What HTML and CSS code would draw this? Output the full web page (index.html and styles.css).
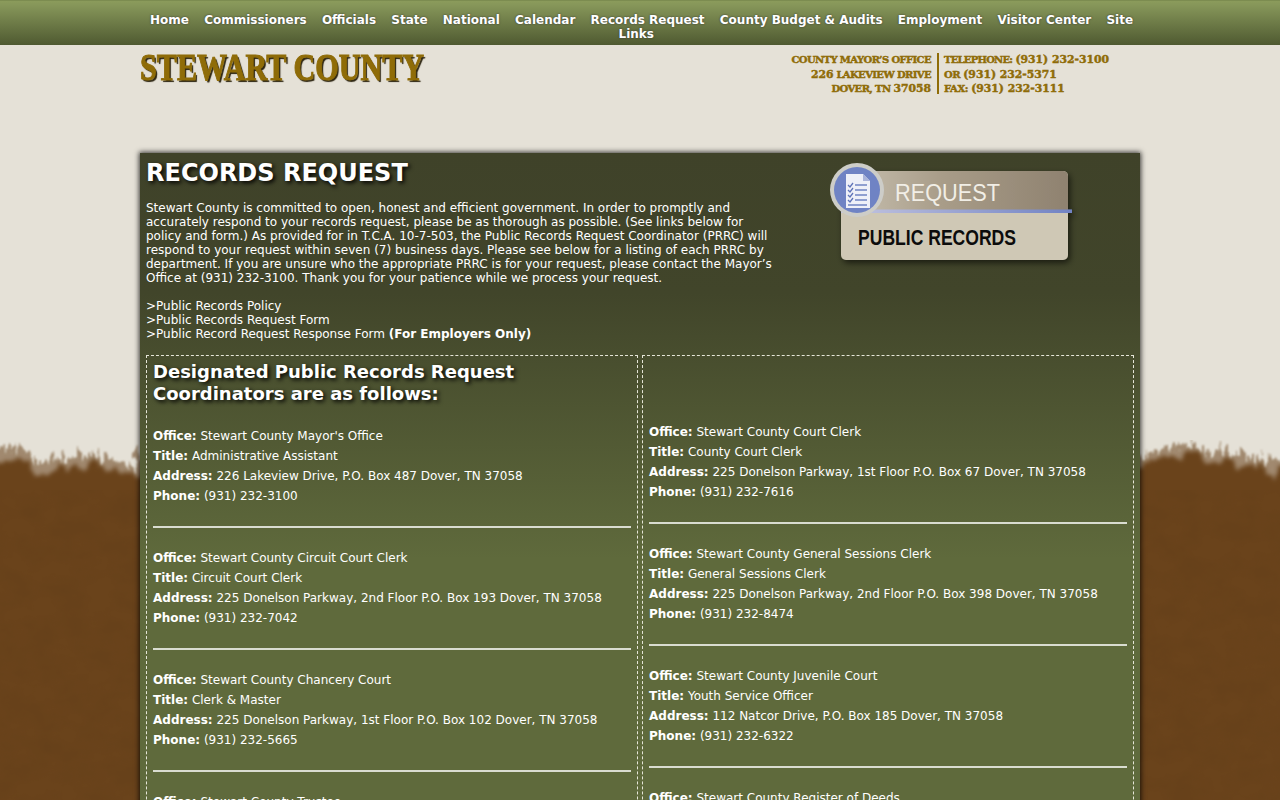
FILE: index.html
```html
<!DOCTYPE html>
<html lang="en">
<head>
<meta charset="utf-8">
<title>Records Request - Stewart County</title>
<link rel="stylesheet" href="styles.css">
</head>
<body>
<svg class="ground" width="1280" height="360" viewBox="0 0 1280 360" aria-hidden="true">
  <defs>
    <filter id="fuzz" x="0" y="-10%" width="100%" height="120%" color-interpolation-filters="sRGB">
      <feTurbulence type="fractalNoise" baseFrequency="0.22 0.05" numOctaves="3" seed="11" result="n"/>
      <feDisplacementMap in="SourceGraphic" in2="n" scale="40" xChannelSelector="R" yChannelSelector="G"/>
      <feGaussianBlur stdDeviation="1"/>
    </filter>
    <filter id="hair" x="0" y="-10%" width="100%" height="120%" color-interpolation-filters="sRGB">
      <feTurbulence type="fractalNoise" baseFrequency="0.09 0.035" numOctaves="3" seed="7" result="n"/>
      <feDisplacementMap in="SourceGraphic" in2="n" scale="26" xChannelSelector="R" yChannelSelector="G"/>
      <feGaussianBlur stdDeviation="2"/>
    </filter>
    <filter id="mottle" x="0" y="0" width="100%" height="100%" color-interpolation-filters="sRGB">
      <feTurbulence type="fractalNoise" baseFrequency="0.035 0.05" numOctaves="3" seed="4"/>
      <feColorMatrix values="0 0 0 0 .36  0 0 0 0 .23  0 0 0 0 .10  1.600 0 0 0 -.55"/>
    </filter>
  </defs>
  <path class="soil soil-fuzz" filter="url(#fuzz)" d="M-30 12L20 8 40 22 60 18 90 14 130 24 150 16 1140 16 1160 10 1180 6 1210 10 1240 14 1270 20 1310 16 1310 100 -30 100Z"/>
  <path class="soil" filter="url(#hair)" d="M-30 24L20 18 40 36 60 30 90 24 130 36 150 26 1140 26 1160 20 1180 14 1210 20 1240 24 1270 32 1310 26 1310 400 -30 400Z"/>
  <rect class="mottle" y="50" width="1280" height="310" filter="url(#mottle)"/>
</svg>
<nav class="nav">
  <div class="nav-links">
    <a>Home</a><a>Commissioners</a><a>Officials</a><a>State</a><a>National</a><a>Calendar</a><a>Records Request</a><a>County Budget &amp; Audits</a><a>Employment</a><a>Visitor Center</a><a>Site Links</a>
  </div>
</nav>
<div class="wrap">
  <header class="head">
    <div class="logo">STEWART COUNTY</div>
    <div class="contact">
      <div class="contact-left">COUNTY MAYOR’S OFFICE<br><span class="num">226</span> LAKEVIEW DRIVE<br>DOVER, TN <span class="num">37058</span></div>
      <div class="contact-right"><span class="tight">TELEPHONE:</span> <span class="num">(931) 232-3100</span><br>OR <span class="num">(931) 232-5371</span><br>FAX: <span class="num">(931) 232-3111</span></div>
    </div>
  </header>
  <main class="panel">
    <div class="intro">
      <div class="intro-text">
        <h1>RECORDS REQUEST</h1>
        <p>Stewart County is committed to open, honest and efficient government. In order to promptly and accurately respond to your records request, please be as thorough as possible. (See links below for policy and form.) As provided for in T.C.A. 10-7-503, the Public Records Request Coordinator (PRRC) will respond to your request within seven (7) business days. Please see below for a listing of each PRRC by department. If you are unsure who the appropriate PRRC is for your request, please contact the Mayor’s Office at (931) 232-3100. Thank you for your patience while we process your request.</p>
        <p>&gt;Public Records Policy<br>&gt;Public Records Request Form<br>&gt;Public Record Request Response Form <b>(For Employers Only)</b></p>
      </div>
      <div class="badge">
        <svg class="badge-art" width="256" height="112" viewBox="0 0 256 112">
          <defs>
            <linearGradient id="bar" x1="0" x2="1"><stop offset="0" stop-color="#c9c2b2"/><stop offset=".45" stop-color="#a89c88"/><stop offset="1" stop-color="#8f8270"/></linearGradient>
            <linearGradient id="line" x1="0" x2="1"><stop offset="0" stop-color="#c5c6e0"/><stop offset="1" stop-color="#7183c4"/></linearGradient>
            <filter id="shadow" x="-10%" y="-10%" width="125%" height="125%"><feDropShadow dx="2" dy="3" stdDeviation="3" flood-color="#000" flood-opacity=".6"/></filter>
          </defs>
          <g filter="url(#shadow)">
            <rect x="18" y="10" width="227" height="89" rx="5" fill="#cfc8b5"/>
            <path d="M18 50V15a5 5 0 0 1 5-5h217a5 5 0 0 1 5 5v35z" fill="url(#bar)"/>
            <rect x="18" y="48.500" width="231" height="3.500" fill="url(#line)"/>
          </g>
          <circle cx="34" cy="29" r="27" fill="#cdcdc8"/>
          <circle cx="34" cy="29" r="23" fill="#6f83c4"/>
          <path d="M23 13H40L47 20V47H23Z" fill="#eef0f8"/>
          <path d="M40 13V20H47Z" fill="#aab4da"/>
          <path d="M32 24H44M32 29H44M32 34H44M32 39H44M25 44H44" stroke="#8f9fd0" stroke-width="2.200"/>
          <path d="M25 24L27 26 30 22M25 29L27 31 30 27M25 34L27 36 30 32M25 39L27 41 30 37" stroke="#5f74b8" stroke-width="1.300" fill="none"/>
          <text class="badge-top" x="72" y="40" textLength="105" lengthAdjust="spacingAndGlyphs">REQUEST</text>
          <text class="badge-bottom" x="35" y="84" textLength="158" lengthAdjust="spacingAndGlyphs">PUBLIC RECORDS</text>
        </svg>
      </div>
    </div>
    <div class="cols">
      <section class="col">
        <h2>Designated Public Records Request Coordinators are as follows:</h2>
        <div class="entry"><b>Office:</b> Stewart County Mayor's Office<br><b>Title:</b> Administrative Assistant<br><b>Address:</b> 226 Lakeview Drive, P.O. Box 487 Dover, TN 37058<br><b>Phone:</b> (931) 232-3100</div>
        <hr>
        <div class="entry"><b>Office:</b> Stewart County Circuit Court Clerk<br><b>Title:</b> Circuit Court Clerk<br><b>Address:</b> 225 Donelson Parkway, 2nd Floor P.O. Box 193 Dover, TN 37058<br><b>Phone:</b> (931) 232-7042</div>
        <hr>
        <div class="entry"><b>Office:</b> Stewart County Chancery Court<br><b>Title:</b> Clerk &amp; Master<br><b>Address:</b> 225 Donelson Parkway, 1st Floor P.O. Box 102 Dover, TN 37058<br><b>Phone:</b> (931) 232-5665</div>
        <hr>
        <div class="entry"><b>Office:</b> Stewart County Trustee</div>
      </section>
      <section class="col col-right">
        <div class="entry"><b>Office:</b> Stewart County Court Clerk<br><b>Title:</b> County Court Clerk<br><b>Address:</b> 225 Donelson Parkway, 1st Floor P.O. Box 67 Dover, TN 37058<br><b>Phone:</b> (931) 232-7616</div>
        <hr>
        <div class="entry"><b>Office:</b> Stewart County General Sessions Clerk<br><b>Title:</b> General Sessions Clerk<br><b>Address:</b> 225 Donelson Parkway, 2nd Floor P.O. Box 398 Dover, TN 37058<br><b>Phone:</b> (931) 232-8474</div>
        <hr>
        <div class="entry"><b>Office:</b> Stewart County Juvenile Court<br><b>Title:</b> Youth Service Officer<br><b>Address:</b> 112 Natcor Drive, P.O. Box 185 Dover, TN 37058<br><b>Phone:</b> (931) 232-6322</div>
        <hr>
        <div class="entry"><b>Office:</b> Stewart County Register of Deeds</div>
      </section>
    </div>
  </main>
</div>
</body>
</html>
```
FILE: styles.css
```css
html, body { margin: 0; height: 800px; overflow: hidden; }
body { background: #e5e1d7; font-family: "DejaVu Sans", sans-serif; font-size: 12px; line-height: 14px; color: #fff; position: relative; }
.ground { position: absolute; left: 0; top: 440px; }
.soil { fill: #6a431b; }
.soil-fuzz { opacity: .55; }
.mottle { opacity: .3; }
.nav { position: relative; height: 45px; box-sizing: border-box; padding-top: 12px; background: linear-gradient(#8b9b5b 0, #87975a 8%, #4f5a31 100%); border-top: 1px solid #7c8c50; }
.nav-links { width: 1000px; margin: 0 auto; text-align: center; font-weight: bold; font-size: 12px; }
.nav-links a { padding: 0 7.600px; color: #fff; text-shadow: 0 0 2px #333; }
.nav-links a:first-child { margin-left: -4.500px; }
.wrap { position: relative; width: 1000px; margin: 0 auto; }
.head { height: 108px; display: flex; justify-content: space-between; }
.logo { font-family: "Liberation Serif", serif; font-weight: bold; font-size: 37px; line-height: 46px; color: #8f6c08; -webkit-text-stroke: 1px #8f6c08; text-shadow: 2px 2px 1px #2c2410; transform: scaleX(.815); transform-origin: left top; white-space: nowrap; }
.contact { display: flex; margin: 8px 31px 0 0; font-family: "DejaVu Serif", serif; font-weight: bold; font-size: 10px; line-height: 14.500px; color: #8f6c08; -webkit-text-stroke: .45px #8f6c08; }
.contact-left { text-align: right; padding-right: 6px; border-right: 2px solid #8f6c08; height: 41px; letter-spacing: -.6px; }
.contact-right { padding-left: 5px; letter-spacing: -.4px; }
.tight { letter-spacing: -.75px; }
.num { font-size: 10.800px; letter-spacing: 0; }
.panel { height: 700px; background: linear-gradient(#3f4229 0, #41452a 20%, #5f6a3c 58%, #5f6a3c 100%); box-shadow: 0 0 5px 1px rgba(0,0,0,.75); }
.intro { display: flex; height: 202px; padding: 0 6px; }
.intro-text { width: 630px; }
h1 { margin: 0; padding-top: 5px; font-size: 24px; line-height: 30px; text-shadow: 2px 2px 4px #000; }
p { margin: 0 0 14px; }
.intro h1 + p { margin-top: 13px; }
.badge { margin: 8px 0 0 47px; }
.badge-art { display: block; }
.badge-top { font-family: "Liberation Sans", sans-serif; font-size: 23px; fill: #f1eee6; }
.badge-bottom { font-family: "Liberation Sans", sans-serif; font-weight: bold; font-size: 22px; fill: #0c0c0c; }
.cols { display: flex; gap: 4px; padding: 0 6px; }
.col { box-sizing: border-box; width: 492px; height: 600px; padding: 5px 6px 4px; border: 1px dashed #e6e6d8; line-height: 20px; }
.col-right { padding-top: 66px; }
h2 { margin: 0 0 21px; font-size: 18px; line-height: 22px; text-shadow: 2px 2px 4px #000; }
.entry { font-size: 12px; }
hr { margin: 20px 0; height: 2px; border: 0; background: #d9dcd0; }
```
